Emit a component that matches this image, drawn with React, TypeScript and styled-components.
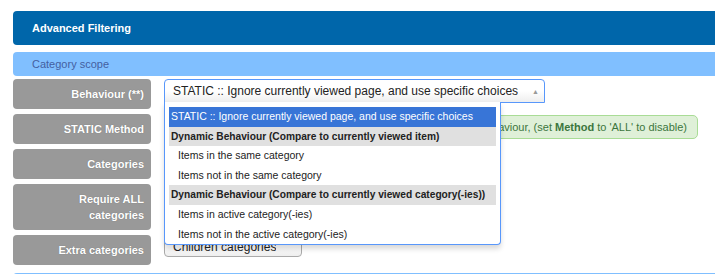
import React from 'react';
import styled, {createGlobalStyle} from 'styled-components';

const GlobalStyle = createGlobalStyle`
  html, body {
    margin: 0;
    padding: 0;
    background: #fff;
    overflow: hidden;
  }
  body {
    font-family: "Liberation Sans", Arial, sans-serif;
  }
`;

interface Option {
    label: string;
    kind: 'option' | 'group' | 'child';
    active?: boolean;
}

const behaviourOptions: Option[] = [
    {label: 'STATIC :: Ignore currently viewed page, and use specific choices', kind: 'option', active: true},
    {label: 'Dynamic Behaviour (Compare to currently viewed item)', kind: 'group'},
    {label: 'Items in the same category', kind: 'child'},
    {label: 'Items not in the same category', kind: 'child'},
    {label: 'Dynamic Behaviour (Compare to currently viewed category(-ies))', kind: 'group'},
    {label: 'Items in active category(-ies)', kind: 'child'},
    {label: 'Items not in the active category(-ies)', kind: 'child'},
];

const App: React.FC = () => {
    return (
        <>
            <GlobalStyle/>
            <Page>
                <Header>Advanced Filtering</Header>
                <SectionBar>Category scope</SectionBar>
                <Rows>
                    <Row>
                        <Label>Behaviour (**)</Label>
                        <Field>
                            <SelectWrap>
                                <SelectBox $open>
                                    <SelectText>STATIC :: Ignore currently viewed page, and use specific choices</SelectText>
                                    <Arrow>▲</Arrow>
                                </SelectBox>
                                <Dropdown>
                                    {behaviourOptions.map((o) => (
                                        <OptionRow key={o.label} $kind={o.kind} $active={o.active}>
                                            {o.label}
                                        </OptionRow>
                                    ))}
                                </Dropdown>
                            </SelectWrap>
                        </Field>
                    </Row>
                    <Row>
                        <Label>STATIC Method</Label>
                        <Field>
                            <SelectBox $width={200}>
                                <SelectText>ANY</SelectText>
                            </SelectBox>
                            <Note>
                                Used for STATIC behaviour, (set <b>Method</b> to 'ALL' to disable)
                            </Note>
                        </Field>
                    </Row>
                    <Row>
                        <Label>Categories</Label>
                        <Field/>
                    </Row>
                    <Row>
                        <Label>Require ALL<br/>categories</Label>
                        <Field/>
                    </Row>
                    <Row>
                        <Label>Extra categories</Label>
                        <Field>
                            <SelectBox $width={138} $height={21} $offset={1}>
                                <SelectText>Children categories</SelectText>
                            </SelectBox>
                        </Field>
                    </Row>
                </Rows>
                <SectionBar $line/>
            </Page>
        </>
    );
};

const Page = styled.div`
  width: 740px;
  padding: 11px 0 0 13px;
`;

const Header = styled.div`
  height: 34px;
  line-height: 34px;
  padding-left: 19px;
  background: #0066aa;
  border-radius: 4px;
  color: #fff;
  font-size: 11px;
  font-weight: bold;
`;

const SectionBar = styled.div<{$line?: boolean}>`
  margin-top: ${(p) => (p.$line ? '0' : '7px')};
  height: 24px;
  line-height: 24px;
  padding-left: 19px;
  background: #80bfff;
  border-radius: 4px;
  color: #44609f;
  font-size: 11px;
`;

const Rows = styled.div`
  width: 685px;
  display: flex;
  flex-direction: column;
  gap: 5px;
  margin: 3px 0 8px;
`;

const Row = styled.div`
  display: flex;
  gap: 13px;
`;

const Label = styled.div`
  width: 138px;
  flex: none;
  box-sizing: border-box;
  padding: 7px 7px 7px 0;
  line-height: 16px;
  background: #999;
  border-radius: 4px;
  color: #fff;
  font-size: 11px;
  font-weight: bold;
  text-align: right;
  text-shadow: 0 0 1px rgba(0, 0, 0, 0.3);
`;

const Field = styled.div`
  flex: 1;
  display: flex;
  align-items: flex-start;
  justify-content: space-between;
`;

const SelectWrap = styled.div`
  position: relative;
`;

const SelectBox = styled.div<{$open?: boolean; $width?: number; $height?: number; $offset?: number}>`
  box-sizing: border-box;
  width: ${(p) => (p.$width ? `${p.$width}px` : '381px')};
  height: ${(p) => p.$height ?? 24}px;
  margin-top: ${(p) => p.$offset ?? 0}px;
  display: flex;
  align-items: center;
  justify-content: space-between;
  padding: 0 5px 0 8px;
  border: 1px solid ${(p) => (p.$open ? '#5897fb' : '#aaa')};
  border-radius: ${(p) => (p.$open ? '4px 4px 0 0' : '4px')};
  background: linear-gradient(to bottom, #fff 0%, #fff 50%, #eee 100%);
  color: #222;
  font-size: 12px;
`;

const SelectText = styled.span`
  white-space: nowrap;
  overflow: hidden;
`;

const Arrow = styled.span`
  color: #999;
  font-size: 7px;
`;

const Dropdown = styled.div`
  position: absolute;
  top: 23px;
  left: 0;
  width: 337px;
  box-sizing: border-box;
  padding: 5px 4px 0;
  background: #fff;
  border: 1px solid #5897fb;
  border-top: none;
  border-radius: 0 0 4px 4px;
  box-shadow: 0 4px 5px rgba(0, 0, 0, 0.15);
  z-index: 10;
`;

const OptionRow = styled.div<{$kind: Option['kind']; $active?: boolean}>`
  height: 19.6px;
  line-height: 19.6px;
  white-space: nowrap;
  overflow: hidden;
  font-size: ${(p) => (p.$kind === 'group' ? '10.2px' : '10.5px')};
  padding-left: ${(p) => (p.$kind === 'child' ? '9px' : '2px')};
  font-weight: ${(p) => (p.$kind === 'group' ? 'bold' : 'normal')};
  background: ${(p) => (p.$active ? '#3875d7' : p.$kind === 'group' ? '#e0e0e0' : 'transparent')};
  color: ${(p) => (p.$active ? '#fff' : '#222')};
`;

const Note = styled.div`
  margin-top: 1px;
  height: 24px;
  box-sizing: border-box;
  line-height: 22px;
  padding: 0 10px;
  background: #dff0d8;
  border: 1px solid #a9dc96;
  border-radius: 5px;
  color: #3c763d;
  font-size: 11px;
  white-space: nowrap;
`;

export default App;
